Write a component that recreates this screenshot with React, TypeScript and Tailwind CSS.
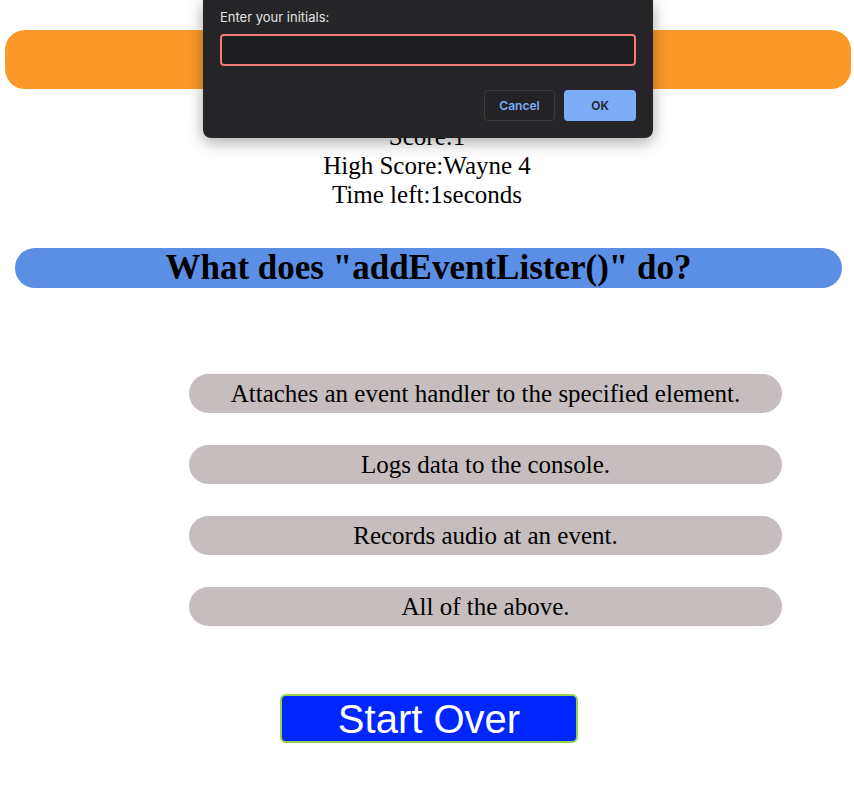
import React from "react";

const serif = { fontFamily: '"Liberation Serif", "Times New Roman", serif' };

export default function App() {
  const answers = [
    "Attaches an event handler to the specified element.",
    "Logs data to the console.",
    "Records audio at an event.",
    "All of the above.",
  ];
  return (
    <div className="relative min-h-[805px] w-[854px] bg-white text-black" style={serif}>
      <div className="pl-[5px] pr-[3px] pt-[30px]">
        <div className="h-[59px] rounded-[20px] bg-[#fb9a28]" />
      </div>
      <div className="mt-[34px] flex flex-col items-center text-[25px] leading-[28.75px]">
        <div>Score:1</div>
        <div>High Score:Wayne 4</div>
        <div>Time left:1seconds</div>
      </div>
      <div className="ml-[15px] mr-[12px] mt-[39px] flex h-[40px] items-center justify-center rounded-full bg-[#5b8fe6]">
        <h1 className="text-[35px] font-bold leading-[40px]">What does "addEventLister()" do?</h1>
      </div>
      <div className="ml-[189px] mt-[86px] flex w-[593px] flex-col gap-[32px]">
        {answers.map((a) => (
          <div
            key={a}
            className="flex h-[39px] items-center justify-center rounded-full bg-[#c6bebe] pt-[1px] text-[25px] leading-[28.75px]"
          >
            {a}
          </div>
        ))}
      </div>
      <div className="mt-[68px] flex pl-[280px]">
        <button
          className="flex h-[49px] w-[298px] items-center justify-center rounded-[6px] border-2 border-[#93d24a] bg-[#0026ff] text-[40px] leading-none text-white"
          style={{ fontFamily: '"Liberation Sans", Arial, sans-serif' }}
        >
          Start Over
        </button>
      </div>

      <div
        className="absolute left-[203px] top-0 h-[138px] w-[450px] rounded-b-[8px] bg-[#252527] px-[17px] shadow-[0_4px_16px_rgba(0,0,0,0.35)]"
        style={{ fontFamily: 'Inter, Roboto, "Liberation Sans", sans-serif' }}
      >
        <div className="pt-[9px] text-[13px] leading-[16px] text-[#e3e3e3]">Enter your initials:</div>
        <div className="mt-[9px] h-[32px] w-[416px] rounded-[4px] border-2 border-[#f07b76] bg-[#1e1e20]" />
        <div className="mt-[24px] flex justify-end gap-[9px]">
          <div className="flex h-[31px] w-[71px] items-center justify-center rounded-[4px] border border-[#3b3b3d] bg-[#232325] text-[12px] font-semibold text-[#7cacf8]">
            Cancel
          </div>
          <div className="flex h-[31px] w-[72px] items-center justify-center rounded-[4px] bg-[#7cacf8] text-[12px] font-semibold text-[#202124]">
            OK
          </div>
        </div>
      </div>
    </div>
  );
}
